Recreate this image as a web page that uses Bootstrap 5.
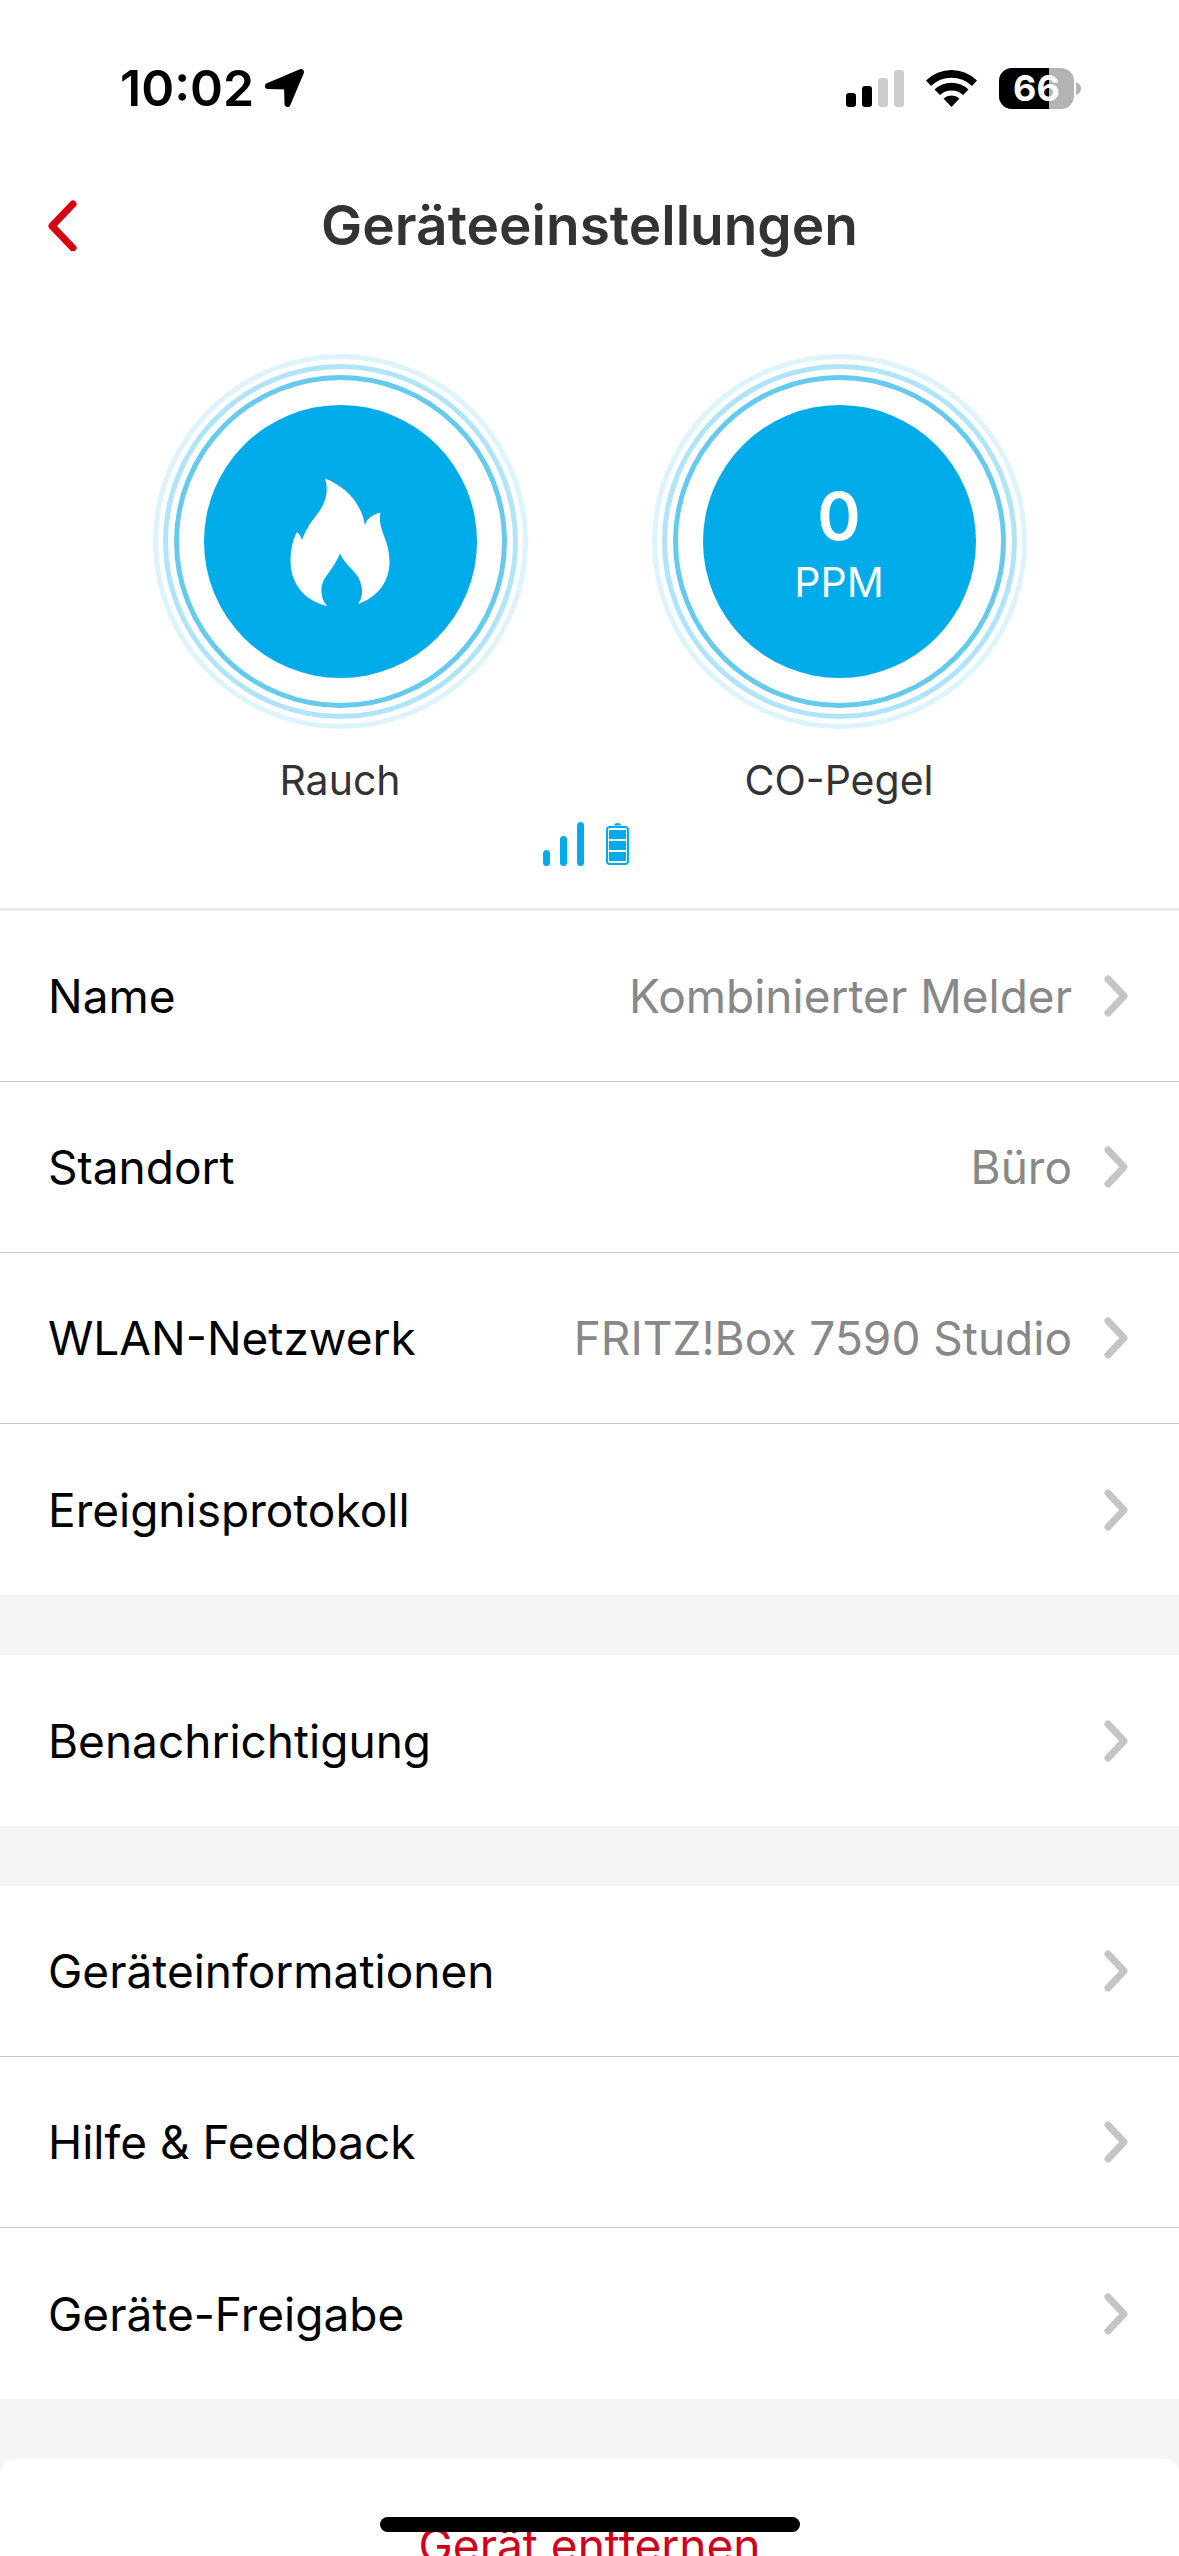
<!DOCTYPE html>
<html lang="de">
<head>
<meta charset="utf-8">
<meta name="viewport" content="width=device-width, initial-scale=1">
<title>Geräteeinstellungen</title>
<link href="https://cdn.jsdelivr.net/npm/bootstrap@5.3.0/dist/css/bootstrap.min.css" rel="stylesheet">
<style>
  body { font-family: Inter, "Liberation Sans", sans-serif; background: #f5f5f5; color: #000; }
  svg { display: block; flex: none; }
  .app { height: 100vh; }
  .scroller { overflow-y: auto; scrollbar-width: none; min-height: 0; }
  .scroller::-webkit-scrollbar { display: none; }
  .status { height: 176px; padding: 0 98px 0 120px; }
  .clock { font-size: 50px; line-height: 60px; font-weight: 600; }
  .indicators { gap: 22px; }
  .charge { width: 82px; height: 41px; }
  .charge-level { font-size: 36px; line-height: 41px; font-weight: 700; width: 75px; }
  .topbar { height: 98px; padding: 0 47px; }
  .back { width: 30px; }
  .heading { font-size: 55px; line-height: 64px; font-weight: 600; color: #333; }
  .overview { padding: 80px 0 41px; border-bottom: 3px solid #ebebeb; }
  .gauges { gap: 124px; }
  .ring { border: 5px solid; }
  .ring-far { width: 375px; height: 375px; padding: 5px; border-color: #def4fc; }
  .ring-mid { padding: 6px; border-color: #b0e4f8; }
  .ring-near { padding: 25px; border-color: #66caef; }
  .disc { background: #00abe9; }
  .reading { font-size: 66px; line-height: 80px; font-weight: 600; }
  .caption { font-size: 41px; line-height: 52px; }
  .gauge-label { margin-top: 25px; color: #333; }
  .health { gap: 22px; margin-top: 15px; padding-right: 8px; }
  .group + .group { margin-top: 60px; }
  .group .list-group-item { padding: 0 51px 0 48px; height: 171px; gap: 32px; font-size: 46px; line-height: 60px; color: #000; border-color: #c8c8c8; border-width: 0 0 1px; }
  .group .list-group-item:last-child { border-bottom-color: #fff; }
  .group .setting { color: #888; }
  .remove { height: 171px; margin-top: 60px; font-size: 46px; line-height: 60px; color: #d0021b; border-radius: 15px; }
  .home { width: 420px; height: 15px; bottom: 24px; left: 50%; transform: translateX(-50%); background: #000; }
</style>
</head>
<body>
<svg width="0" height="0" class="position-absolute" aria-hidden="true">
  <symbol id="next" viewBox="0 0 24 42"><path d="M4 4 20 21 4 38" fill="none" stroke="#c5c5c5" stroke-width="7" stroke-linecap="round" stroke-linejoin="round"/></symbol>
</svg>
<div class="app d-flex flex-column overflow-hidden">
  <div class="status bg-white d-flex align-items-center justify-content-between flex-shrink-0">
    <div class="d-flex align-items-center gap-2">
      <span class="clock">10:02</span>
      <svg width="44" height="40" viewBox="0 0 44 40" aria-hidden="true"><path d="M6 18 39 4 25.500 36 25 18.500Z" stroke="#000" stroke-width="6" stroke-linejoin="round"/></svg>
    </div>
    <div class="indicators d-flex align-items-center">
      <svg width="58" height="37" viewBox="0 0 58 37" aria-hidden="true"><rect y="23" width="10" height="14" rx="3"/><rect x="16" y="16" width="10" height="21" rx="3"/><rect x="32" y="8" width="10" height="29" rx="3" fill="#ccc"/><rect x="48" width="10" height="37" rx="3" fill="#ccc"/></svg>
      <svg width="51" height="37" viewBox="0 0 51 37" aria-hidden="true"><path d="M0 10.500a36.500 36.500 0 0 1 51 0L46 16a29.500 29.500 0 0 0-41 0ZM8.500 19.500a24.500 24.500 0 0 1 34 0L37 25a17 17 0 0 0-23 0ZM17.500 28.500a12 12 0 0 1 16 0L25.500 37Z"/></svg>
      <div class="charge position-relative">
        <svg width="82" height="41" viewBox="0 0 82 41" aria-hidden="true"><rect width="75" height="41" rx="13" fill="#b3b3b3"/><path d="M13 0H50V41H13A13 13 0 0 1 0 28V13A13 13 0 0 1 13 0Z"/><path d="M77 14q5 2 5 6.500T77 27Z" fill="#b3b3b3"/></svg>
        <span class="charge-level position-absolute top-0 start-0 text-center text-white">66</span>
      </div>
    </div>
  </div>
  <main class="scroller flex-grow-1">
    <header class="topbar bg-white d-flex align-items-center justify-content-between">
      <button type="button" class="back btn p-0 border-0" aria-label="Zurück"><svg width="30" height="52" viewBox="0 0 30 52"><path d="M26 5 5 27 26 49" fill="none" stroke="#d80013" stroke-width="7" stroke-linecap="round" stroke-linejoin="round"/></svg></button>
      <h1 class="heading m-0">Geräteeinstellungen</h1>
      <span class="back"></span>
    </header>
    <section class="overview bg-white">
      <div class="gauges d-flex justify-content-center">
        <div class="text-center caption">
          <div class="ring ring-far rounded-circle"><div class="ring ring-mid rounded-circle h-100"><div class="ring ring-near rounded-circle h-100">
            <div class="disc rounded-circle h-100 d-flex align-items-center justify-content-center">
              <svg width="100" height="128" viewBox="0 0 100 128" aria-hidden="true"><path fill="#fff" d="M35 0.500C54 8 71 23 75 47.500 76 42 81 37 90.500 34.500 87 52 99.500 60 99.500 84 99.500 105 86 120 68 126 73 119 73 112 70 103 67 94 55 87 50 75.500 45 88 36 97 33 104 30 112 31 121 37 128 15 123 0.500 106 0.500 83 0.500 72 3 61 7 54 10 57 11 59 12 62 19 43 27 39 33 27 37 19 38 9 35 0.500Z"/></svg>
            </div>
          </div></div></div>
          <div class="gauge-label">Rauch</div>
        </div>
        <div class="text-center caption">
          <div class="ring ring-far rounded-circle"><div class="ring ring-mid rounded-circle h-100"><div class="ring ring-near rounded-circle h-100">
            <div class="disc rounded-circle h-100 d-flex flex-column align-items-center justify-content-center text-white">
              <span class="reading">0</span>
              <span>PPM</span>
            </div>
          </div></div></div>
          <div class="gauge-label">CO-Pegel</div>
        </div>
      </div>
      <div class="health d-flex justify-content-center align-items-center">
        <svg width="41" height="46" viewBox="0 0 41 46" role="img" aria-label="Signalstärke" fill="#00abe9"><rect y="29" width="7" height="16" rx="3.500"/><rect x="17" y="15" width="7" height="30" rx="3.500"/><rect x="34" y="1" width="7" height="44" rx="3.500"/></svg>
        <svg width="23" height="42" viewBox="0 0 23 42" role="img" aria-label="Batterie" fill="#00abe9"><path d="M8 2.500Q8 0 11.500 0T15 2.500Z"/><rect x="1" y="4" width="21" height="37" rx="3" fill="none" stroke="#00abe9" stroke-width="2"/><rect x="3" y="7" width="17" height="9"/><rect x="3" y="18" width="17" height="9"/><rect x="3" y="29" width="17" height="9"/></svg>
      </div>
    </section>
    <nav class="group list-group list-group-flush">
      <a href="#" class="list-group-item d-flex align-items-center"><span class="me-auto">Name</span><span class="setting">Kombinierter Melder</span><svg width="24" height="42" aria-hidden="true"><use href="#next"/></svg></a>
      <a href="#" class="list-group-item d-flex align-items-center"><span class="me-auto">Standort</span><span class="setting">Büro</span><svg width="24" height="42" aria-hidden="true"><use href="#next"/></svg></a>
      <a href="#" class="list-group-item d-flex align-items-center"><span class="me-auto">WLAN-Netzwerk</span><span class="setting">FRITZ!Box 7590 Studio</span><svg width="24" height="42" aria-hidden="true"><use href="#next"/></svg></a>
      <a href="#" class="list-group-item d-flex align-items-center"><span class="me-auto">Ereignisprotokoll</span><svg width="24" height="42" aria-hidden="true"><use href="#next"/></svg></a>
    </nav>
    <nav class="group list-group list-group-flush">
      <a href="#" class="list-group-item d-flex align-items-center"><span class="me-auto">Benachrichtigung</span><svg width="24" height="42" aria-hidden="true"><use href="#next"/></svg></a>
    </nav>
    <nav class="group list-group list-group-flush">
      <a href="#" class="list-group-item d-flex align-items-center"><span class="me-auto">Geräteinformationen</span><svg width="24" height="42" aria-hidden="true"><use href="#next"/></svg></a>
      <a href="#" class="list-group-item d-flex align-items-center"><span class="me-auto">Hilfe &amp; Feedback</span><svg width="24" height="42" aria-hidden="true"><use href="#next"/></svg></a>
      <a href="#" class="list-group-item d-flex align-items-center"><span class="me-auto">Geräte-Freigabe</span><svg width="24" height="42" aria-hidden="true"><use href="#next"/></svg></a>
    </nav>
    <button type="button" class="remove btn bg-white w-100 border-0 p-0">Gerät entfernen</button>
  </main>
</div>
<div class="home position-fixed rounded-pill"></div>
<script src="https://cdn.jsdelivr.net/npm/bootstrap@5.3.0/dist/js/bootstrap.bundle.min.js"></script>
</body>
</html>
